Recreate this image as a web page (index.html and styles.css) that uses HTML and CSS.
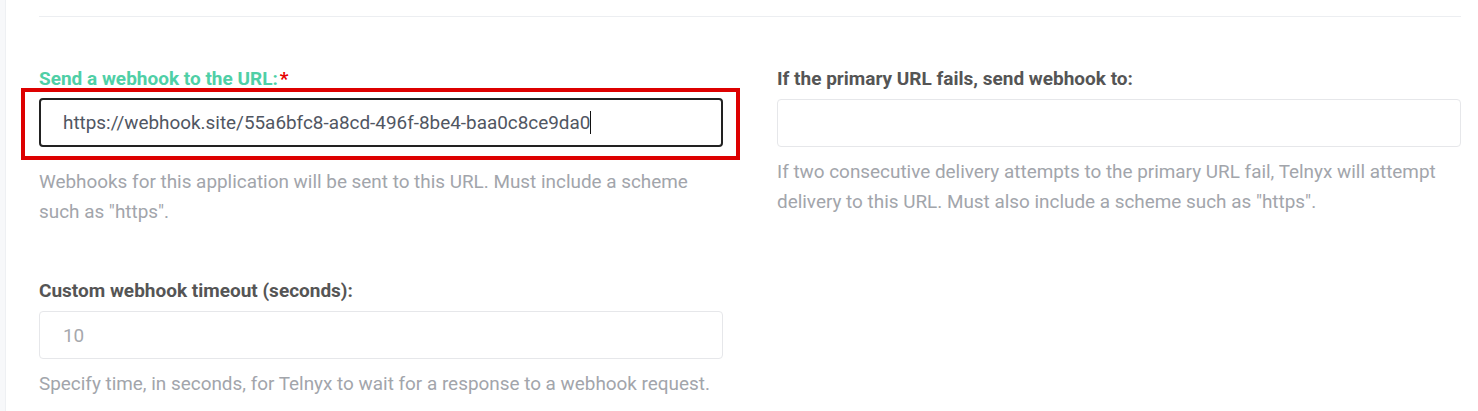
FILE: index.html
```html
<!DOCTYPE html>
<html lang="en">
<head>
<meta charset="utf-8">
<title>Webhook settings</title>
<link rel="stylesheet" href="styles.css">
</head>
<body>
<div class="page">
  <div class="side-strip"></div>
  <main class="content">
    <div class="divider"></div>
    <div class="row row-top">
      <div class="field">
        <label class="label label-active">Send a webhook to the URL:<span class="req">*</span></label>
        <div class="highlight">
          <div class="input input-focused"><span class="input-text">https://webhook.site/55a6bfc8-a8cd-496f-8be4-baa0c8ce9da0</span><span class="caret"></span></div>
        </div>
        <p class="hint hint-after-highlight">Webhooks for this application will be sent to this URL. Must include a scheme such as "https".</p>
      </div>
      <div class="field">
        <label class="label">If the primary URL fails, send webhook to:</label>
        <div class="input"></div>
        <p class="hint">If two consecutive delivery attempts to the primary URL fail, Telnyx will attempt delivery to this URL. Must also include a scheme such as "https".</p>
      </div>
    </div>
    <div class="row row-bottom">
      <div class="field">
        <label class="label">Custom webhook timeout (seconds):</label>
        <div class="input"><span class="placeholder">10</span></div>
        <p class="hint">Specify time, in seconds, for Telnyx to wait for a response to a webhook request.</p>
      </div>
    </div>
  </main>
</div>
</body>
</html>
```

FILE: styles.css
```css
* { box-sizing: border-box; }

html, body {
  margin: 0;
  padding: 0;
  background: #ffffff;
  font-family: Roboto, "Liberation Sans", Arial, sans-serif;
}

.page {
  display: flex;
  min-height: 411px;
}

.side-strip {
  width: 6px;
  flex: none;
  background: #f7f8fa;
  border-right: 1px solid #eef0f3;
}

.content {
  flex: 1;
  padding: 16px 17px 0 33px;
}

.divider {
  height: 1px;
  background: #eceef1;
}

.row {
  display: grid;
  grid-template-columns: 684px 684px;
  column-gap: 54px;
}

.row-top {
  margin-top: 51px;
}

.row-bottom {
  margin-top: 53px;
}

.field {
  display: flex;
  flex-direction: column;
}

.label {
  display: block;
  font-size: 19px;
  line-height: 22px;
  font-weight: 700;
  color: #555555;
  margin-bottom: 9px;
}

.label-active {
  color: #4fcfa6;
}

.req {
  color: #e60000;
  margin-left: 2px;
}

.highlight {
  border: 4px solid #dd0000;
  margin: -11px -17px 0 -18px;
  padding: 6px 13px 9px 14px;
}

.input {
  height: 48px;
  border: 1px solid #e6e7ea;
  border-radius: 4px;
  background: #fff;
  padding: 0 23px;
  display: flex;
  align-items: center;
  font-size: 18.9px;
  color: #505662;
}

.input-focused {
  height: 49px;
  border: 2px solid #222222;
  padding: 0 22px;
}

.caret {
  display: inline-block;
  width: 1px;
  height: 23px;
  background: #111;
}

.placeholder {
  color: #a6a8ad;
}

.hint {
  margin: 10px 0 0;
  font-size: 18.9px;
  line-height: 30px;
  color: #a2a5ab;
}

.hint-after-highlight {
  margin-top: 7px;
}
```
